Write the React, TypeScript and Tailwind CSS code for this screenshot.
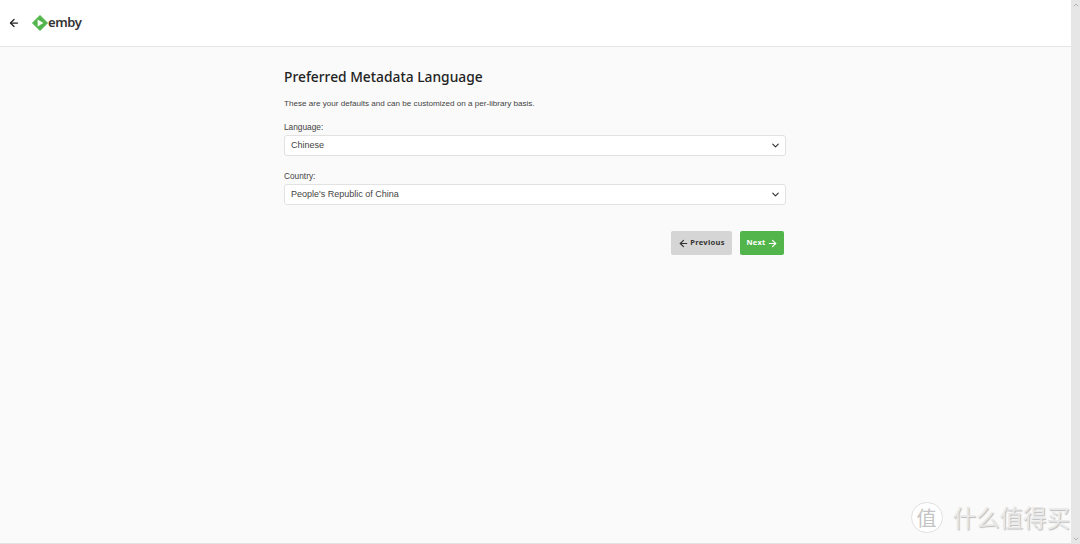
import { ArrowLeft, ArrowRight, ChevronDown, ChevronUp } from 'lucide-react';

function SelectField({ label, value }: { label: string; value: string }) {
  return (
    <div className="flex flex-col">
      <label className="text-[8.3px] leading-[12px] text-[#444] mb-[2px]">{label}</label>
      <div className="h-[21px] bg-white border border-[#e2e2e2] rounded-[3px] flex items-center justify-between pl-[6px] pr-[4px]">
        <span className="text-[9px] text-[#444]">{value}</span>
        <ChevronDown size={11} strokeWidth={2.5} className="text-[#333]" />
      </div>
    </div>
  );
}

function EmbyLogo() {
  return (
    <div className="flex items-center">
      <svg width="16" height="16" viewBox="0 0 16 16">
        <path d="M8 0.5 L15.5 8 L8 15.5 L0.5 8 Z" fill="#52b54b" stroke="#52b54b" strokeLinejoin="round" />
        <path d="M5.6 4.6 L11.4 8 L5.6 11.4 Z" fill="#fff" />
      </svg>
      <span className="text-[13px] font-semibold text-[#333] tracking-[-0.4px] leading-none [font-family:'Noto_Sans',sans-serif]">emby</span>
    </div>
  );
}

export default function App() {
  return (
    <div className="flex h-[544px] w-[1080px] overflow-hidden bg-[#fafafa] [font-family:'Liberation_Sans',Arial,sans-serif]">
      <div className="relative flex-1 flex flex-col">
        <header className="h-[47px] shrink-0 bg-white border-b border-[#e6e6e6] flex items-center pl-[8px] pb-[1px] gap-[12px]">
          <ArrowLeft size={12} strokeWidth={2.5} className="text-[#222]" />
          <EmbyLogo />
        </header>

        <main className="w-[502px] ml-[284px] flex flex-col">
          <h1 className="mt-[21px] text-[13.8px] leading-[18px] font-medium text-[#222] [font-family:'Noto_Sans',sans-serif]">
            Preferred Metadata Language
          </h1>
          <p className="mt-[12px] text-[8.1px] leading-[12px] text-[#444]">
            These are your defaults and can be customized on a per-library basis.
          </p>
          <div className="mt-[11px] flex flex-col gap-[14px]">
            <SelectField label="Language:" value="Chinese" />
            <SelectField label="Country:" value="People's Republic of China" />
          </div>
          <div className="mt-[26px] pr-[2px] flex justify-end gap-[8px]">
            <button className="h-[24px] w-[61px] bg-[#d5d5d5] rounded-[2px] flex items-center justify-center gap-[1px] text-[7.5px] font-bold text-[#333] tracking-[0.3px] [font-family:'Noto_Sans',sans-serif]">
              <ArrowLeft size={11} strokeWidth={2.5} />
              Previous
            </button>
            <button className="h-[24px] w-[44px] bg-[#52b54b] rounded-[2px] flex items-center justify-center gap-[1px] text-[7.5px] font-bold text-white tracking-[0.3px] [font-family:'Noto_Sans',sans-serif]">
              Next
              <ArrowRight size={11} strokeWidth={2.5} />
            </button>
          </div>
        </main>

        {/* watermark */}
        <div className="absolute right-[1px] bottom-[11px] flex items-center gap-[10px] text-[#e9e9e9] [text-shadow:1px_1px_1px_#bbb] [font-family:'Noto_Sans_CJK_SC',sans-serif]">
          <div className="w-[32px] h-[31px] rounded-full bg-white border border-[#e0e0e0] flex items-center justify-center text-[20px] text-[#c4c4c4] [text-shadow:none]">
            值
          </div>
          <span className="text-[23.5px] leading-none">什么值得买</span>
        </div>
        <div className="absolute left-0 right-0 bottom-0 h-[1px] bg-[#e2e2e2]" />
      </div>

      {/* scrollbar */}
      <div className="w-[9px] shrink-0 bg-[#e6e6e6] flex flex-col justify-between items-center py-[1px]">
        <ChevronUp size={8} strokeWidth={2} className="text-[#999]" />
        <ChevronDown size={8} strokeWidth={2} className="text-[#999]" />
      </div>
    </div>
  );
}
